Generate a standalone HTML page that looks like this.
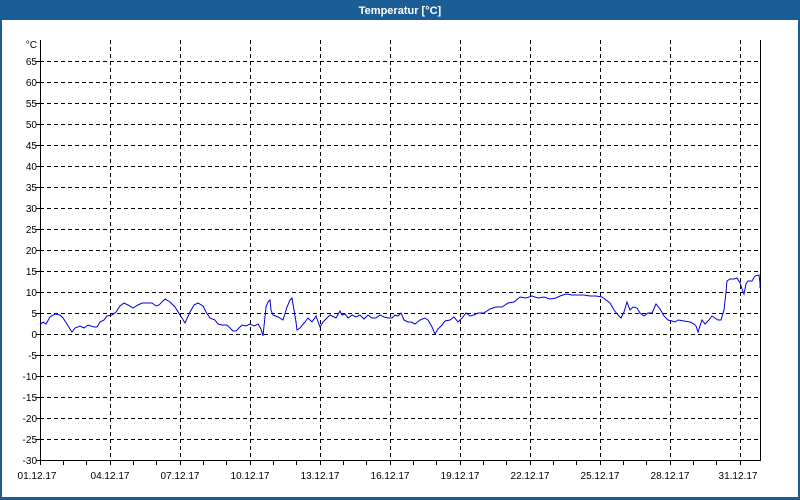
<!DOCTYPE html>
<html><head><meta charset="utf-8"><style>
html,body{margin:0;padding:0;width:800px;height:500px;overflow:hidden;background:#fff;font-family:"Liberation Sans",Tahoma,sans-serif}
</style></head><body>
<svg width="800" height="500" xmlns="http://www.w3.org/2000/svg" style="position:absolute;left:0;top:0">
<rect x="0" y="0" width="800" height="500" fill="#1b5e96"/>
<rect x="2" y="20" width="796" height="477" fill="#fff"/>
<text x="400" y="14" fill="#fff" font-size="11" font-weight="bold" text-anchor="middle" font-family="Liberation Sans,sans-serif">Temperatur [°C]</text>
<g stroke="#000" stroke-width="1" stroke-dasharray="4,3" fill="none">
<path d="M40 61.5H760M40 82.5H760M40 103.5H760M40 124.5H760M40 145.5H760M40 166.5H760M40 187.5H760M40 208.5H760M40 229.5H760M40 250.5H760M40 271.5H760M40 292.5H760M40 313.5H760M40 334.5H760M40 355.5H760M40 376.5H760M40 397.5H760M40 418.5H760M40 439.5H760"/>
<path d="M110.5 40V460M180.5 40V460M250.5 40V460M320.5 40V460M390.5 40V460M460.5 40V460M530.5 40V460M600.5 40V460M670.5 40V460M740.5 40V460"/>
</g>
<path d="M40.5 40V460.5H760.5V40" stroke="#000" fill="none"/>
<g stroke="#000"><path d="M63.5 460V465M86.5 460V465M133.5 460V465M156.5 460V465M203.5 460V465M226.5 460V465M273.5 460V465M296.5 460V465M343.5 460V465M366.5 460V465M413.5 460V465M436.5 460V465M483.5 460V465M506.5 460V465M553.5 460V465M576.5 460V465M623.5 460V465M646.5 460V465M693.5 460V465M716.5 460V465M40.5 460V465M110.5 460V465M180.5 460V465M250.5 460V465M320.5 460V465M390.5 460V465M460.5 460V465M530.5 460V465M600.5 460V465M670.5 460V465M740.5 460V465M36 61.5H40M36 82.5H40M36 103.5H40M36 124.5H40M36 145.5H40M36 166.5H40M36 187.5H40M36 208.5H40M36 229.5H40M36 250.5H40M36 271.5H40M36 292.5H40M36 313.5H40M36 334.5H40M36 355.5H40M36 376.5H40M36 397.5H40M36 418.5H40M36 439.5H40M36 460.5H40"/></g>
<g font-size="10" fill="#000" text-anchor="end" font-family="Liberation Sans,sans-serif">
<text x="37" y="48">°C</text>
<text x="37" y="65">65</text><text x="37" y="86">60</text><text x="37" y="107">55</text><text x="37" y="128">50</text><text x="37" y="149">45</text><text x="37" y="170">40</text><text x="37" y="191">35</text><text x="37" y="212">30</text><text x="37" y="233">25</text><text x="37" y="254">20</text><text x="37" y="275">15</text><text x="37" y="296">10</text><text x="37" y="317">5</text><text x="37" y="338">0</text><text x="37" y="359">-5</text><text x="37" y="380">-10</text><text x="37" y="401">-15</text><text x="37" y="422">-20</text><text x="37" y="443">-25</text><text x="37" y="464">-30</text>
</g>
<g font-size="10" fill="#000" text-anchor="middle" font-family="Liberation Sans,sans-serif">
<text x="37" y="479">01.12.17</text><text x="110" y="479">04.12.17</text><text x="180" y="479">07.12.17</text><text x="250" y="479">10.12.17</text><text x="320" y="479">13.12.17</text><text x="390" y="479">16.12.17</text><text x="460" y="479">19.12.17</text><text x="530" y="479">22.12.17</text><text x="600" y="479">25.12.17</text><text x="670" y="479">28.12.17</text><text x="738" y="479">31.12.17</text>
</g>
<polyline fill="none" stroke="#0000e0" stroke-width="1" points="40,325 43,322 46,324 50,317 55,314 60,315 63,318 67,324 70,329 72,332 75,328 80,326 84,328 88,325 94,327 97,327 100,322 104,320 107,316 112,315 116,312 120,306 124,303 128,305 133,308 138,305 142,303 148,303 152,303 156,306 159,305 165,299 170,302 175,307 180,315 185,323 190,312 194,305 198,303 203,306 206,312 210,318 215,320 218,324 222,325 227,325 230,328 233,331 236,331 239,328 242,325 246,326 250,324 254,326 258,324 261,329 263,336 266,307 268,302 270,300 271,310 273,315 278,317 283,320 287,307 290,300 292,298 294,310 296,322 297,330 300,328 305,322 308,318 312,322 316,316 320,327 323,322 326,319 330,315 332,316 336,318 340,311 342,315 345,314 348,318 352,315 356,317 360,315 364,319 368,315 372,318 376,318 380,315 384,317 388,318 392,318 395,315 398,316 401,313 404,320 408,322 411,322 415,324 420,320 425,318 428,320 432,327 435,334 438,329 442,325 445,321 450,320 454,317 458,322 462,318 466,313 470,316 474,315 478,313 484,313 490,309 496,307 502,307 508,303 514,302 520,297 526,298 532,296 538,298 544,297 550,299 556,298 560,296 566,294 572,295 578,295 584,295 590,296 596,296 602,297 606,300 610,303 614,310 618,315 621,318 624,312 627,302 630,310 633,307 637,308 640,313 644,316 648,313 652,313 656,304 660,309 664,316 668,320 672,321 675,322 678,320 684,321 690,322 694,324 696,326 698,332 702,320 705,324 708,321 712,316 715,318 718,320 721,320 724,310 726,292 727,281 730,279 734,279 737,278 740,283 742,289 744,294 746,284 748,281 752,281 755,276 759,275 760,283 760,288"/>
</svg>
</body></html>
